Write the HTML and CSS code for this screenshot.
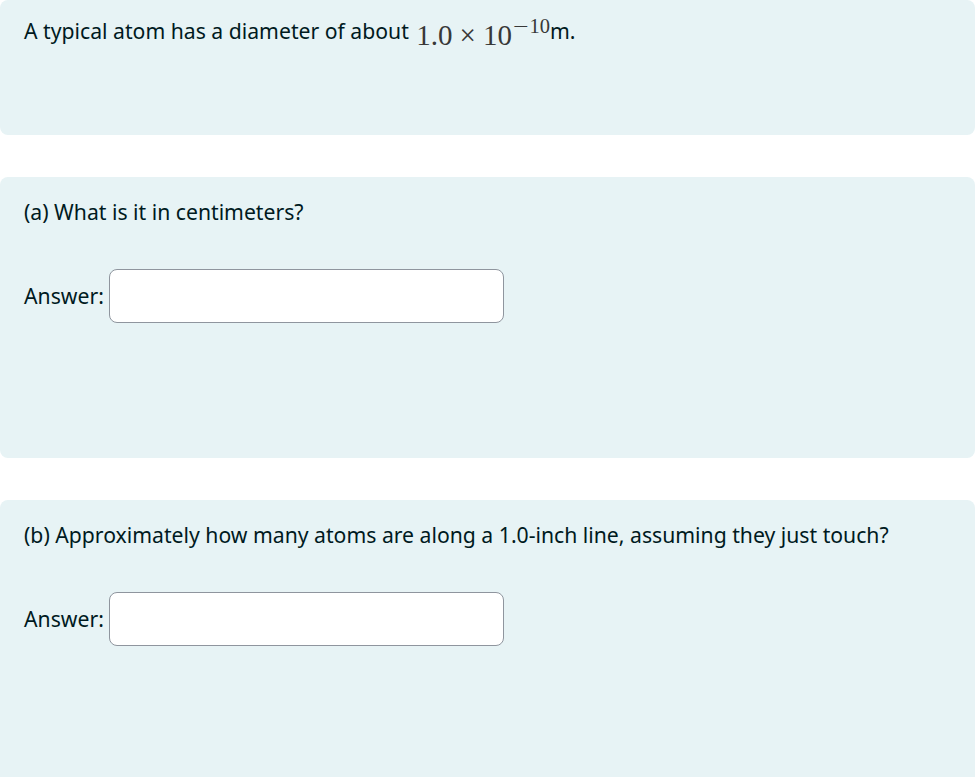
FILE: index.html
```html
<!DOCTYPE html>
<html lang="en">
<head>
<meta charset="utf-8">
<title>Atom diameter question</title>
<link rel="stylesheet" href="styles.css">
</head>
<body>
<div class="panel panel-intro">
  <p class="qtext">A typical atom has a diameter of about <span class="math"><span class="mn">1.0</span><span class="mo">×</span><span class="mn">10</span><sup class="msup"><span class="mminus">−</span>10</sup></span>m.</p>
</div>
<div class="panel panel-part">
  <p class="qtext">(a) What is it in centimeters?</p>
  <div class="answer-row">
    <label class="answer-label" for="ans1">Answer:</label>
    <input class="answer-input" id="ans1" type="text">
  </div>
</div>
<div class="panel panel-part panel-last">
  <p class="qtext">(b) Approximately how many atoms are along a 1.0-inch line, assuming they just touch?</p>
  <div class="answer-row">
    <label class="answer-label" for="ans2">Answer:</label>
    <input class="answer-input" id="ans2" type="text">
  </div>
</div>
</body>
</html>
```
FILE: styles.css
```css
html, body {
  margin: 0;
  padding: 0;
  background: #ffffff;
}
body {
  font-family: "Noto Sans", "Open Sans", sans-serif;
  font-size: 21.2px;
  line-height: 30px;
  color: #001a1e;
  overflow: hidden;
}
.panel {
  background: #e7f3f5;
  border-radius: 8px;
  box-sizing: border-box;
  padding: 20px 24px 0 24px;
  margin-bottom: 42px;
}
.panel-intro {
  height: 135px;
  padding-top: 16px;
}
.panel-part {
  height: 281px;
}
.panel-last {
  height: 300px;
  margin-bottom: 0;
}
.qtext {
  margin: 0;
  white-space: nowrap;
}
.math {
  font-family: "Liberation Serif", "Times New Roman", serif;
  font-size: 29px;
  color: #383838;
  vertical-align: -6px;
  line-height: 1;
  margin-left: 2px;
}
.mo {
  margin: 0 7px;
}
.msup {
  font-size: 20.5px;
  vertical-align: 12px;
  line-height: 1;
  margin-left: 1px;
}
.mminus {
  display: inline-block;
  transform: scaleX(1.35);
  margin: 0 3px 0 2px;
}
.answer-row {
  display: flex;
  align-items: center;
  gap: 5px;
  margin-top: 42px;
}
.answer-label {
  display: block;
}
.answer-input {
  box-sizing: border-box;
  width: 395px;
  height: 54px;
  margin: 0;
  border: 1px solid #8f959e;
  border-radius: 8px;
  background: #ffffff;
  padding: 6px 12px;
  font: inherit;
}
```
